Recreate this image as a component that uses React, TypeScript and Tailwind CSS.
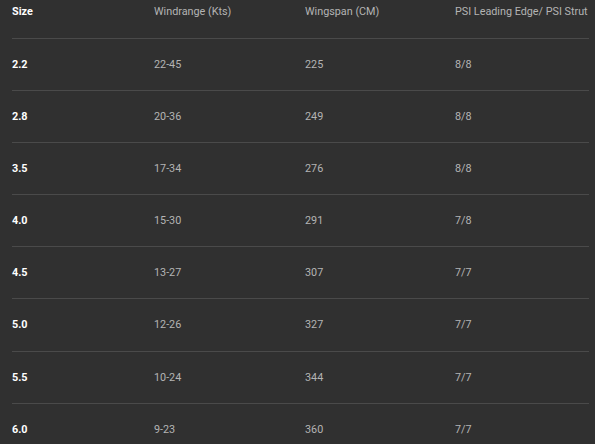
import React from 'react';

const rows = [
  ['2.2', '22-45', '225', '8/8'],
  ['2.8', '20-36', '249', '8/8'],
  ['3.5', '17-34', '276', '8/8'],
  ['4.0', '15-30', '291', '7/8'],
  ['4.5', '13-27', '307', '7/7'],
  ['5.0', '12-26', '327', '7/7'],
  ['5.5', '10-24', '344', '7/7'],
  ['6.0', '9-23', '360', '7/7'],
];

const App: React.FC = () => {
  return (
    <div className="w-[595px] h-[444px] bg-[#303030] overflow-hidden pl-[12px] pr-[6px] font-['Roboto',sans-serif] text-[10.8px]">
      {/* Header */}
      <div className="grid grid-cols-[142px_151px_150px_1fr] h-[38px] pt-[5px] leading-[14px]">
        <span className="font-bold text-white">Size</span>
        <span className="text-[#b4b4b4]">Windrange (Kts)</span>
        <span className="text-[#b4b4b4]">Wingspan (CM)</span>
        <span className="text-[#b4b4b4] whitespace-nowrap">PSI Leading Edge/ PSI Strut</span>
      </div>

      {rows.map((r) => (
        <div
          key={r[0]}
          className="grid grid-cols-[142px_151px_150px_1fr] h-[52.1px] pt-[19px] leading-[14px] border-t border-[#4a4a4a]"
        >
          <span className="font-bold text-white">{r[0]}</span>
          <span className="text-[#b4b4b4]">{r[1]}</span>
          <span className="text-[#b4b4b4]">{r[2]}</span>
          <span className="text-[#b4b4b4]">{r[3]}</span>
        </div>
      ))}
    </div>
  );
};

export default App;
